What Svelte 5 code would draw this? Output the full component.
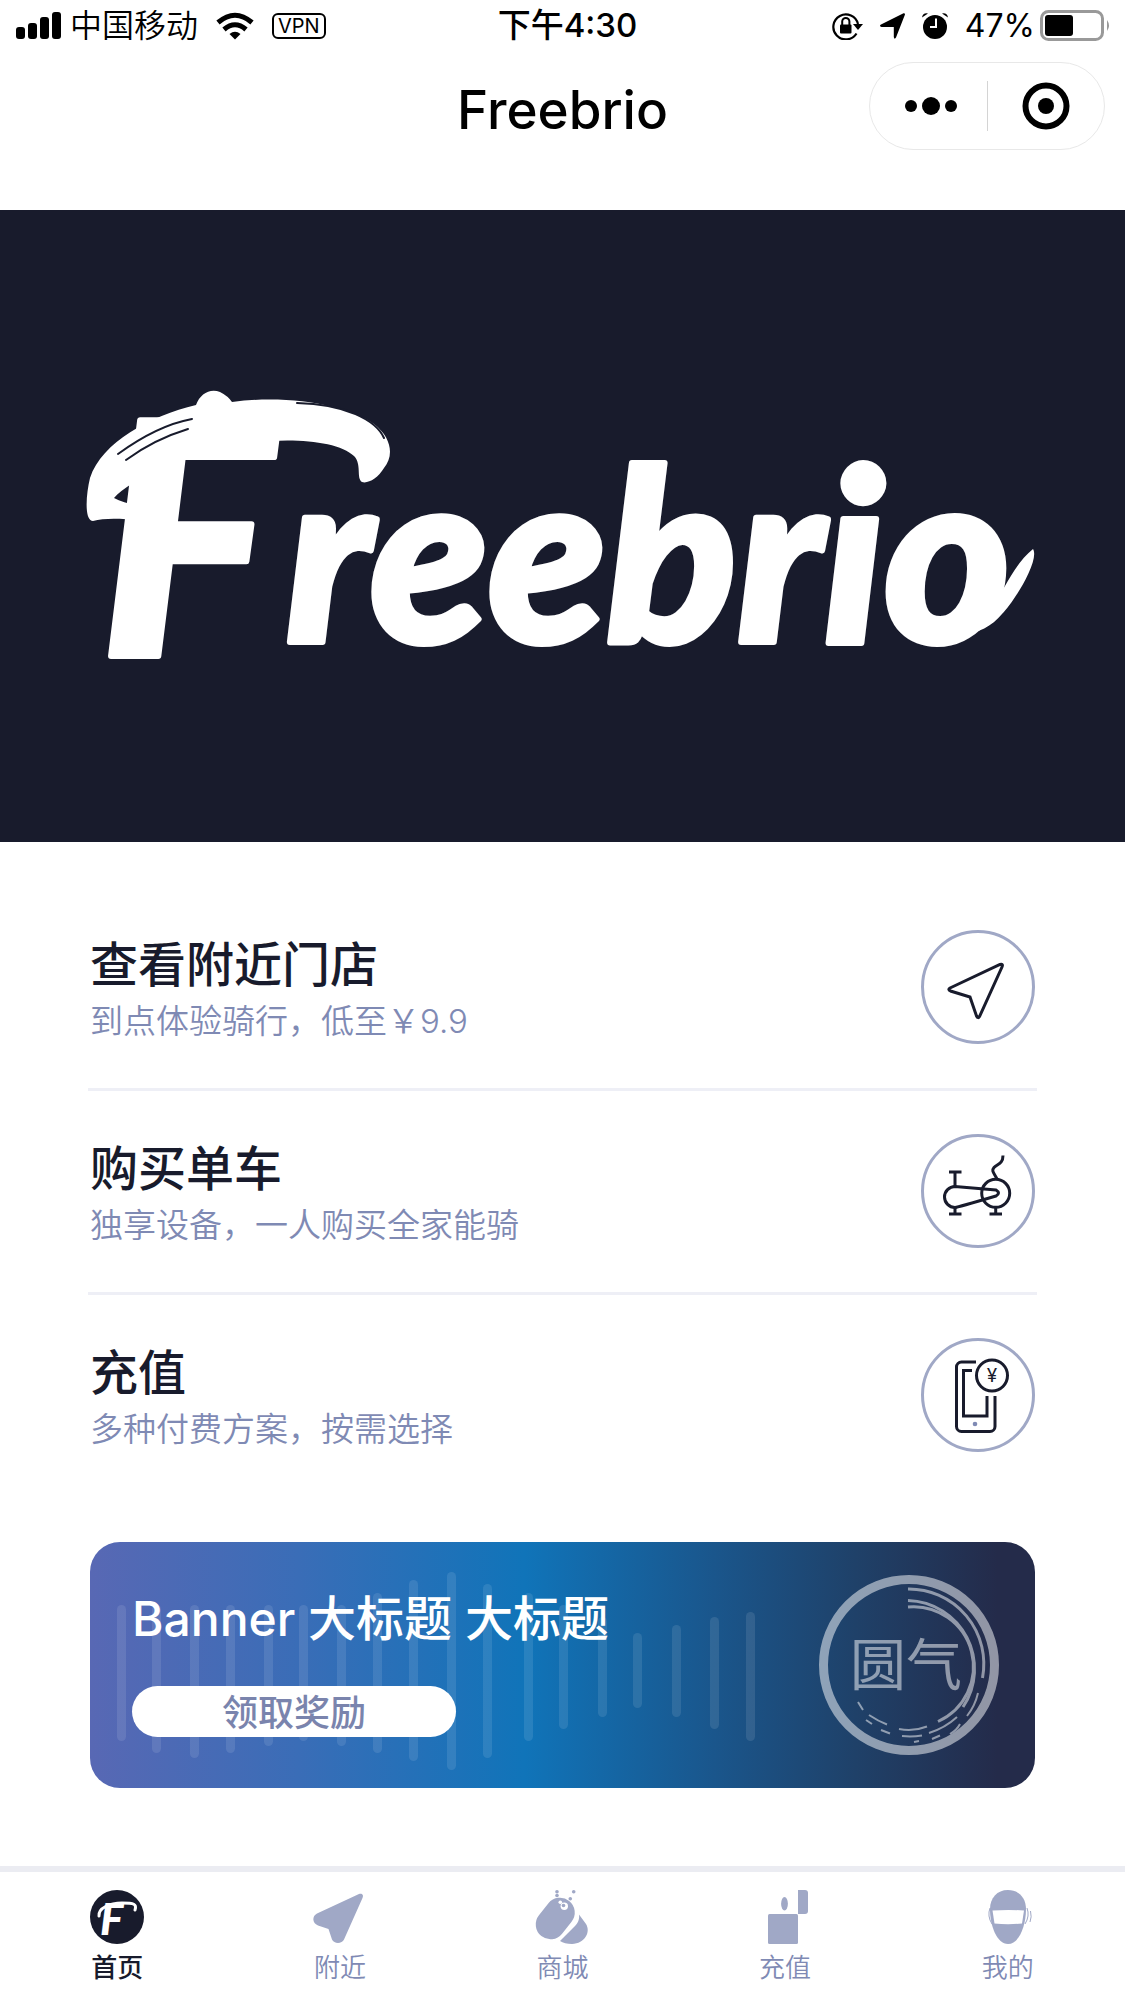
<script lang="ts">
  type Entry = { id: string; title: string; note: string };

  const entries: Entry[] = [
    { id: "stores", title: "查看附近门店", note: "到点体验骑行，低至￥9.9" },
    { id: "bike", title: "购买单车", note: "独享设备，一人购买全家能骑" },
    { id: "recharge", title: "充值", note: "多种付费方案，按需选择" },
  ];

  const tabs = [
    { id: "home", label: "首页" },
    { id: "nearby", label: "附近" },
    { id: "mall", label: "商城" },
    { id: "topup", label: "充值" },
    { id: "mine", label: "我的" },
  ];

  let activeTab = $state("home");

  // centre x, top and bottom of each bar in the banner wave
  const wave = [
    [32, 63, 199],
    [67, 63, 211],
    [105, 63, 216],
    [141, 63, 211],
    [179, 63, 204],
    [214, 63, 199],
    [252, 63, 204],
    [288, 51, 211],
    [324, 38, 219],
    [362, 30, 228],
    [398, 42, 216],
    [439, 51, 199],
    [474, 63, 187],
    [513, 75, 175],
    [548, 91, 166],
    [587, 83, 175],
    [625, 75, 187],
    [661, 70, 199],
  ];
</script>

<div class="page" lang="zh-CN">
  <div class="status">
    <div class="status-side">
      <svg width="46" height="28" viewBox="0 0 46 28" aria-hidden="true">
        <rect x="0" y="15" width="9" height="12" rx="3" />
        <rect x="12" y="11" width="9" height="16" rx="3" />
        <rect x="24" y="5" width="9" height="22" rx="3" />
        <rect x="36" y="0" width="9" height="27" rx="3" />
      </svg>
      <span class="carrier">中国移动</span>
      <svg class="wifi" width="38" height="28" viewBox="0 0 38 28" aria-hidden="true">
        <g fill="none" stroke="#000" stroke-width="5">
          <path d="M2 10.500Q19-4 36 10.500" />
          <path d="M8 17.500Q19 8 30 17.500" />
        </g>
        <path d="M13.500 22Q19 17.500 24.500 22L19 27.500z" />
      </svg>
      <span class="vpn">VPN</span>
    </div>
    <span class="time">下午4:30</span>
    <div class="status-side status-right">
      <svg width="31" height="28" viewBox="0 0 31 28" aria-hidden="true">
        <path d="M24.500 21.500A12.500 12.500 0 1 1 26 12" fill="none" stroke="#000" stroke-width="2.200" />
        <path d="M21 12h10l-5 6z" />
        <rect x="8" y="12.500" width="11.500" height="9" rx="1" />
        <path d="M10.200 13V9.500a3.600 3.600 0 0 1 7.200 0V13" fill="none" stroke="#000" stroke-width="2" />
      </svg>
      <svg width="25" height="26" viewBox="0 0 25 26" aria-hidden="true">
        <path d="M23.500.2Q25.500 0 24.800 2L16 24.500q-1.500 2.500-2.200-.5V14H1.500q-2.800-.8-.5-2.400z" />
      </svg>
      <svg width="26" height="26" viewBox="0 0 26 26" aria-hidden="true">
        <circle cx="13" cy="14" r="12" />
        <path d="M0 4.500Q1-.5 6 .5zM26 4.500Q25-.5 20 .5z" />
        <path d="M14 5.500V14H8" fill="none" stroke="#fff" stroke-width="2" />
      </svg>
      <span class="percent">47%</span>
      <svg width="71" height="32" viewBox="0 0 71 32" aria-hidden="true">
        <rect x="1.500" y="1.500" width="61" height="28" rx="7" fill="none" stroke="#999" stroke-width="3" />
        <rect x="5" y="5" width="28" height="21" rx="3" />
        <path d="M67 10q4 5.500 0 11z" fill="#999" />
      </svg>
    </div>
  </div>

  <header class="nav">
    <h1>Freebrio</h1>
    <div class="capsule">
      <button aria-label="更多">
        <svg width="58" height="48" viewBox="0 0 58 48" aria-hidden="true">
          <circle cx="12" cy="24" r="6" />
          <circle cx="32" cy="24" r="9" />
          <circle cx="52" cy="24" r="6" />
        </svg>
      </button>
      <span class="capsule-line"></span>
      <button aria-label="关闭">
        <svg width="48" height="48" viewBox="0 0 48 48" aria-hidden="true">
          <circle cx="24" cy="24" r="20.500" fill="none" stroke="#000" stroke-width="6" />
          <circle cx="24" cy="24" r="8" />
        </svg>
      </button>
    </div>
  </header>

  <main>
    <svg class="hero" viewBox="0 0 1125 632">
      <g class="wordmark">
        <text x="100" y="446" font-size="325">F</text>
        <text x="286" y="432" font-size="241">reebrio</text>
      </g>
      <!-- brush sweep over the capital and flick after the last letter -->
      <g fill="#fff">
        <path d="M93 311C84 311 86 284 90 268C102 232 150 206 196 195C200 184 210 178 220 182Q228 186 232 192C290 184 350 196 374 214C392 228 394 246 384 258C378 268 368 274 362 272C356 268 362 254 354 246C336 228 270 226 226 238C180 246 130 270 114 288C128 296 158 298 170 302L166 314C140 310 110 306 93 311z" />
        <path d="M962 424C996 412 1004 362 1033 339C1040 350 1014 392 1002 404C992 416 978 424 962 424z" />
      </g>
      <g class="bristles">
        <path d="M118 244C140 228 165 214 192 209M126 250C145 236 165 226 188 219M297 193C345 194 376 210 384 228" />
      </g>
    </svg>

    <nav class="entries">
      {#each entries as entry (entry.id)}
        <a class="entry" href="#{entry.id}">
          <div class="entry-text">
            <h2>{entry.title}</h2>
            <p>{entry.note}</p>
          </div>
          <svg class="entry-icon" width="114" height="114" viewBox="0 0 114 114" aria-hidden="true">
            <circle class="ring" cx="57" cy="57" r="55.500" />
            {#if entry.id === "stores"}
              <path d="M29 58L79 34.500Q82.500 33.500 81 37L58.500 86.500Q57 89 55.500 86L49 67 29.500 61Q26.500 59.500 29 58z" />
            {:else if entry.id === "bike"}
              <path d="M28 38h12.500M34 38v14.500M28 80h12.500M34 73.500V80M68.500 80H81M74.700 73.500V80" />
              <path d="M75 56L34 52.500a10.500 10.500 0 0 0 0 21Q36 73.500 75 62q5-3 0-6z" />
              <circle cx="74.700" cy="59.300" r="14" />
              <path d="M76 45C73 39 70 37 73 33.500S82 30 82 21.500" />
            {:else}
              <path d="M55 24H40.500a5 5 0 0 0-5 5v59.500a5 5 0 0 0 5 5H69a5 5 0 0 0 5-5V58" />
              <path d="M51 32.500h-8.500V78H66V58" />
              <circle cx="71" cy="37.500" r="15.500" />
              <circle class="home-dot" cx="54" cy="86" r="2.300" />
              <text x="71" y="44" font-size="19">¥</text>
            {/if}
          </svg>
        </a>
      {/each}
    </nav>

    <section class="banner">
      <svg class="banner-art" viewBox="0 0 945 246" aria-hidden="true">
        {#each wave as [x, top, bottom]}
          <rect x={x - 5} y={top} width="9" height={bottom - top} rx="4.500" fill="#fff" opacity="0.1" />
        {/each}
        <g class="seal">
          <circle cx="819" cy="123" r="85.500" stroke-width="9" />
          <g stroke-width="3">
            <path d="M818 47a75 75 0 0 1 74.500 89" />
            <path d="M818 58.500A68.500 68.500 0 0 1 873 165" />
            <path d="M818 65A60 60 0 0 1 848 179.500" />
          </g>
          <path
            stroke-width="2"
            d="M768 160l5 8M779 173q9 6 18 9.500M776 178l6 4M791 188l9 3.500M809 187q14 3 28-2.500M812 194q10 1 20-.5M824 200l5-1M839 191q16-5 28-16M842 197l8-3.500M860 192q7-4 10-10M877 174q8-10 11-23"
          />
          <text x="760" y="143" font-size="56">圆气</text>
        </g>
      </svg>
      <h2>Banner 大标题 大标题</h2>
      <button class="claim">领取奖励</button>
    </section>
  </main>

  <nav class="tabbar">
    {#each tabs as tab (tab.id)}
      <a
        class="tab"
        class:active={activeTab === tab.id}
        href="#{tab.id}"
        onclick={() => (activeTab = tab.id)}
      >
        <svg width="54" height="54" viewBox="0 0 54 54" aria-hidden="true">
          {#if tab.id === "home"}
            <circle cx="27" cy="27" r="27" />
            <text class="mark" x="10" y="45" font-size="44">F</text>
            <path d="M9 26C8 18 20 13 32 13S47 14 45 20" fill="none" stroke="#fff" stroke-width="3" stroke-linecap="round" />
          {:else if tab.id === "nearby"}
            <path d="M46 4C49 3 51 5 49.500 8L31 49.500C29 54 21 54 19 49.500L15.500 39 5 35.500C-1 33-1 26 4 23.500z" />
          {:else if tab.id === "mall"}
            <path d="M15.500 34.500L25 22.500" fill="none" stroke="currentColor" stroke-width="29.500" stroke-linecap="round" />
            <path d="M44 24.500L51 34C56 42 50 53.500 37 54 32 54 28 53 25 51L40 36C44 32 44.500 28 44 24.500z" />
            <circle cx="22" cy="1.800" r="1.800" />
            <circle cx="22" cy="5.500" r="1.800" />
            <circle cx="38.700" cy="1.800" r="1.800" />
            <circle cx="35.300" cy="8.700" r="1.800" />
            <circle cx="25.300" cy="12.300" r="1.800" fill="#fff" />
            <circle cx="29.300" cy="16.300" r="3.700" fill="#fff" />
            <circle cx="28.500" cy="15.500" r="1.800" />
          {:else if tab.id === "topup"}
            <rect x="10" y="24" width="30" height="30" rx="1.500" />
            <ellipse cx="26.500" cy="13.700" rx="3.400" ry="6.800" />
            <path d="M40 0h7q3 0 3 3v18q0 3-3 3h-7z" />
          {:else}
            <path d="M27 0C38 0 45 8 45 19 45 36 38 54 27 54S9 36 9 19C9 8 16 0 27 0z" />
            <path d="M11.500 20.500q16-1 31.500 0L41 33.500q-14 1.500-27.500 0z" fill="#fff" />
            <path d="M9 18q-3 8 2 16M46 18q3 8-2 16M49.500 21q1.500 6-.5 11" fill="none" stroke="currentColor" />
          {/if}
        </svg>
        <span>{tab.label}</span>
      </a>
    {/each}
  </nav>
</div>

<style>
  :global(body) {
    margin: 0;
    background: #fff;
  }

  .page {
    --ink: #181b2c;
    --muted: #7f8ab4;
    --soft: #a0a8c6;
    display: flex;
    flex-direction: column;
    min-height: 100vh;
    color: var(--ink);
    font-family: Inter, "Noto Sans CJK SC", sans-serif;
  }

  h1,
  h2,
  p {
    margin: 0;
  }

  a {
    color: inherit;
    text-decoration: none;
  }

  button {
    padding: 0;
    border: 0;
    background: none;
    font: inherit;
    cursor: pointer;
  }

  svg {
    display: block;
    flex: none;
  }

  .status {
    display: grid;
    grid-template-columns: 1fr auto 1fr;
    align-items: center;
    height: 49px;
    padding: 1px 14px 0 16px;
    color: #000;
    font-size: 32px;
    line-height: 49px;
  }

  .status-side {
    display: flex;
    align-items: center;
    gap: 18px;
  }

  .status-right {
    gap: 17px;
    justify-content: flex-end;
  }

  .carrier {
    margin-left: -10px;
    font-weight: 350;
  }

  .vpn {
    padding: 0 4px;
    border: 2px solid #000;
    border-radius: 6px;
    font-size: 20px;
    line-height: 22px;
  }

  .time {
    padding-left: 8px;
    font-size: 33px;
    font-weight: 500;
  }

  .percent {
    margin-right: -12px;
  }

  .nav {
    display: grid;
    grid-template-columns: 1fr auto 1fr;
    align-items: end;
    padding: 12px 20px 60px;
    color: #000;
  }

  .nav h1 {
    grid-column: 2;
    font-size: 53px;
    font-weight: 500;
    line-height: 80px;
  }

  .capsule {
    display: flex;
    align-items: center;
    justify-self: end;
    box-sizing: border-box;
    width: 236px;
    height: 88px;
    border: 1px solid #e8e8e8;
    border-radius: 44px;
  }

  .capsule button {
    display: flex;
    flex: 1;
    justify-content: center;
  }

  .capsule-line {
    width: 1px;
    height: 50px;
    background: #d4d4d4;
  }

  .hero {
    width: 100%;
    height: auto;
    background: var(--ink);
  }

  .wordmark {
    fill: #fff;
    stroke: #fff;
    stroke-width: 6;
    stroke-linejoin: round;
    font-family: Lato, sans-serif;
    font-style: italic;
    font-weight: 900;
  }

  .bristles {
    fill: none;
    stroke: var(--ink);
    stroke-width: 2;
    stroke-linecap: round;
  }

  .entries {
    padding: 45px 88px 0;
  }

  .entry {
    display: flex;
    align-items: flex-start;
    justify-content: space-between;
    padding: 43px 2px 40px;
    border-bottom: 3px solid #eeeff6;
  }

  .entry:last-child {
    border-bottom: 0;
  }

  .entry-text {
    padding-top: 5px;
  }

  .entry h2 {
    font-size: 48px;
    font-weight: 500;
    line-height: 60px;
  }

  .entry p {
    color: var(--muted);
    font-size: 33px;
    font-weight: 350;
    line-height: 53px;
  }

  .entry-icon {
    fill: none;
    stroke: var(--ink);
    stroke-width: 3;
  }

  .entry-icon .ring {
    stroke: var(--soft);
  }

  .entry-icon .home-dot {
    fill: var(--muted);
    stroke: none;
  }

  .entry-icon text {
    fill: var(--ink);
    stroke: none;
    text-anchor: middle;
  }

  .banner {
    position: relative;
    margin: 46px 90px 78px;
    padding: 47px 42px 51px;
    border-radius: 30px;
    overflow: hidden;
    background: linear-gradient(90deg, #5868b4, #3a6db7 22%, #1074b9 46%, #1a568c 66%, #1f4169 81%, #242b4a 96%);
  }

  .banner-art {
    position: absolute;
    inset: 0;
    width: 100%;
    height: 100%;
  }

  .seal {
    fill: none;
    stroke: #fff;
    opacity: 0.5;
  }

  .seal text {
    fill: #fff;
    stroke: none;
  }

  .banner h2 {
    position: relative;
    color: #fff;
    font-size: 48px;
    font-weight: 500;
    line-height: 60px;
  }

  .claim {
    position: relative;
    display: block;
    width: 324px;
    margin-top: 37px;
    padding-top: 3px;
    border-radius: 26px;
    background: #fff;
    color: #7a84ad;
    font-size: 36px;
    font-weight: 500;
    line-height: 48px;
  }

  .tabbar {
    display: flex;
    margin-top: auto;
    padding: 18px 6px 14px;
    border-top: 6px solid #ebecf2;
  }

  .tab {
    display: flex;
    flex: 1;
    flex-direction: column;
    align-items: center;
    gap: 5px;
    color: var(--muted);
    font-size: 26px;
    font-weight: 350;
    line-height: 38px;
  }

  .tab svg {
    color: var(--soft);
    fill: currentColor;
    overflow: visible;
  }

  .tab.active,
  .tab.active svg {
    color: var(--ink);
  }

  .tab.active span {
    font-weight: 500;
  }

  .mark {
    fill: #fff;
    font-family: Lato, sans-serif;
    font-style: italic;
    font-weight: 900;
  }
</style>
